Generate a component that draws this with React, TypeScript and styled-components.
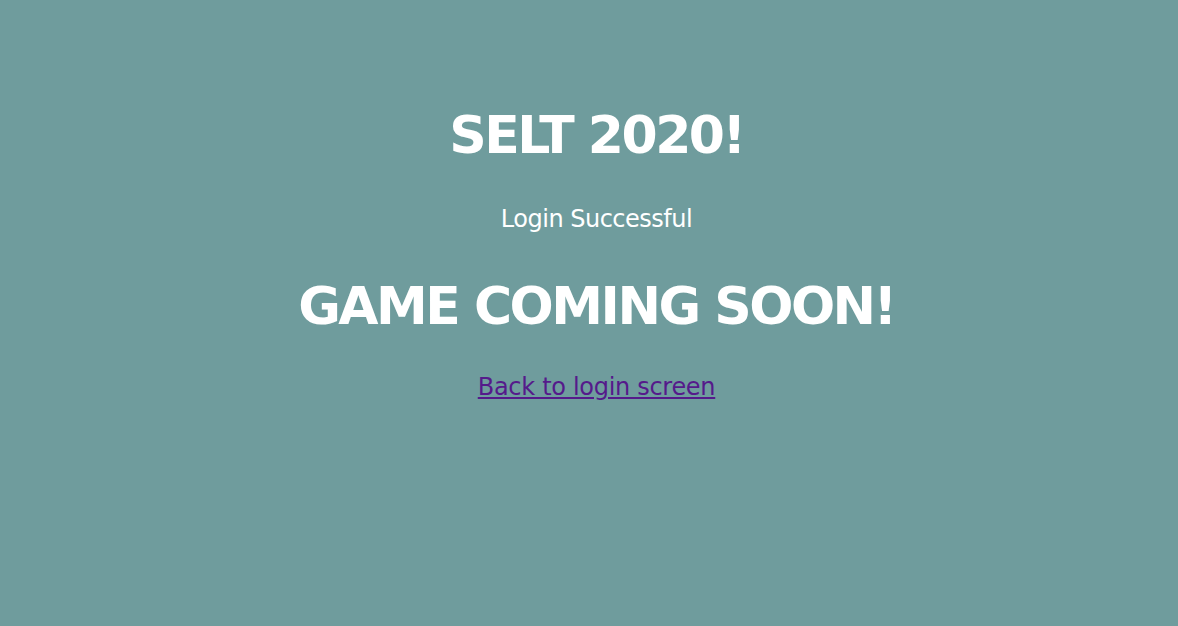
import React from "react";
import styled, { createGlobalStyle } from "styled-components";

const Global = createGlobalStyle`
  html, body { margin: 0; padding: 0; background: #6f9c9d; }
  body { font-family: Tahoma, "DejaVu Sans", Verdana, sans-serif; }
`;

const Page = styled.main`
  box-sizing: border-box;
  min-height: 100vh;
  display: flex;
  flex-direction: column;
  align-items: center;
  padding: 100px 0 0 15px;
  color: #ffffff;
  text-align: center;
`;

const Title = styled.h1<{ $top?: number }>`
  margin: ${(p) => p.$top ?? 0}px 0 0;
  font-size: 52px;
  line-height: 70px;
  font-weight: bold;
  letter-spacing: -2.5px;
`;

const Text = styled.p`
  margin: 34px 0 0;
  font-size: 24px;
  line-height: 30px;
  letter-spacing: -0.5px;
`;

const Back = styled.a`
  margin-top: 31px;
  font-size: 24px;
  line-height: 30px;
  color: #551a8b;
  text-decoration: underline;
  letter-spacing: -0.3px;
`;

export default function App() {
  return (
    <>
      <Global />
      <Page>
        <Title>SELT 2020!</Title>
        <Text>Login Successful</Text>
        <Title $top={37}>GAME COMING SOON!</Title>
        <Back href="#">Back to login screen</Back>
      </Page>
    </>
  );
}
